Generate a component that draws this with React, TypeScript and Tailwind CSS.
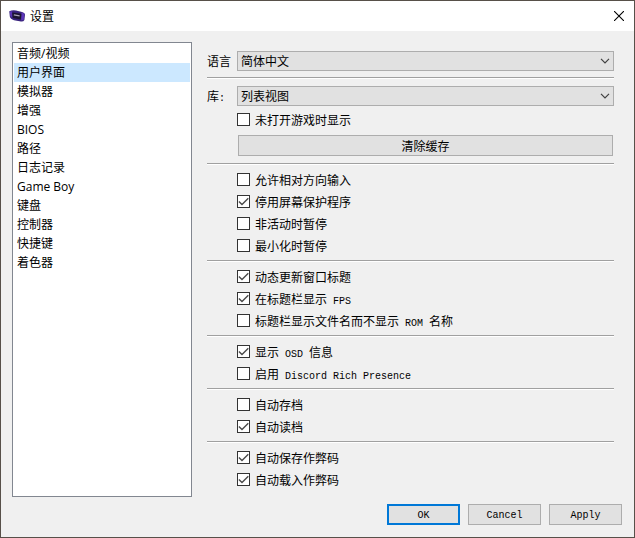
import { ReactNode } from 'react'
import { clsx } from 'clsx'

const pages = [
  '音频/视频',
  '用户界面',
  '模拟器',
  '增强',
  'BIOS',
  '路径',
  '日志记录',
  'Game Boy',
  '键盘',
  '控制器',
  '快捷键',
  '着色器',
]

interface Option {
  label: string
  checked?: boolean
}

const groups: Option[][] = [
  [
    { label: '允许相对方向输入' },
    { label: '停用屏幕保护程序', checked: true },
    { label: '非活动时暂停' },
    { label: '最小化时暂停' },
  ],
  [
    { label: '动态更新窗口标题', checked: true },
    { label: '在标题栏显示 FPS', checked: true },
    { label: '标题栏显示文件名而不显示 ROM 名称' },
  ],
  [
    { label: '显示 OSD 信息', checked: true },
    { label: '启用 Discord Rich Presence' },
  ],
  [{ label: '自动存档' }, { label: '自动读档', checked: true }],
  [
    { label: '自动保存作弊码', checked: true },
    { label: '自动载入作弊码', checked: true },
  ],
]

// Latin runs are set in a half-width face, half as wide as a Chinese character
function Mixed({ text }: { text: string }) {
  return (
    <span className="whitespace-pre">
      {text.split(/([ -~]+)/).map((part, i) =>
        i % 2 ? (
          <span key={i} className="font-['Liberation_Mono',monospace] text-[10px] leading-none">
            {part}
          </span>
        ) : (
          part
        )
      )}
    </span>
  )
}

function CheckBox({ label, checked }: Option) {
  return (
    <label className="flex h-[13px] items-center gap-[5px]">
      <span className="grid shrink-0">
        <input
          type="checkbox"
          defaultChecked={checked}
          className="peer col-start-1 row-start-1 size-[13px] appearance-none border border-[#333] bg-white"
        />
        <svg
          viewBox="0 0 13 13"
          className="pointer-events-none invisible col-start-1 row-start-1 size-[13px] peer-checked:visible"
        >
          <path d="M1.9 6.4 5 9.5 11.3 3.2" fill="none" stroke="#4a4a4a" strokeWidth="1.4" />
        </svg>
      </span>
      <Mixed text={label} />
    </label>
  )
}

function ComboBox({ id, label, value }: { id: string; label: string; value: string }) {
  return (
    <div className="flex items-center">
      <label htmlFor={id} className="w-[30px] shrink-0">
        <Mixed text={label} />
      </label>
      <div className="grid flex-1 items-center">
        <select
          id={id}
          className="col-start-1 row-start-1 h-5 appearance-none border border-[#adadad] bg-[#e1e1e1] px-[3px]"
        >
          <option>{value}</option>
        </select>
        <svg
          viewBox="0 0 10 6"
          className="pointer-events-none col-start-1 row-start-1 mr-1 h-1.5 w-2.5 justify-self-end"
        >
          <path d="M1 .8 5 4.8 9 .8" fill="none" stroke="#404040" strokeWidth="1.2" />
        </svg>
      </div>
    </div>
  )
}

function Separator() {
  return <hr className="h-0.5 border-t border-b border-t-[#a0a0a0] border-b-white" />
}

function PushButton({ children, primary }: { children: ReactNode; primary?: boolean }) {
  return (
    <button
      className={clsx(
        "h-[21px] w-[73px] bg-[#e1e1e1] pt-0.5 font-['Liberation_Mono',monospace] text-[10px] leading-4",
        primary ? 'border-2 border-[#0078d7]' : 'border border-[#adadad]'
      )}
    >
      {children}
    </button>
  )
}

function Logo() {
  return (
    <svg viewBox="0 0 16 12" className="h-3 w-4">
      <path
        d="M.3 1.2Q3 0 7 .5L13 2Q15.8 2.6 16 4.5L15.4 10Q14.6 11.8 12 11.6L5 10.2Q1.4 9.2.8 6.5Z"
        fill="#38237c"
      />
      <path d="M12.4 2.6 15.4 3.6 14.8 9.8 12.2 10.6Z" fill="#5b35b8" />
      <path d="M.8 1.6 3.2 1.2 2.8 7.6 1.3 6Z" fill="#5b35b8" />
      <path d="M3.2 2.4 12.4 3.8 11.8 9.6 3.8 8Z" fill="#1b1430" />
      <path d="M4.8 4.8 10.6 5.9" stroke="#a9a4ba" strokeWidth="1.2" />
    </svg>
  )
}

export default function App() {
  return (
    <div className="flex min-h-screen flex-col border border-[#575049] bg-[#f0f0f0] font-['Noto_Sans_CJK_SC',sans-serif] text-xs leading-4 text-black">
      <header className="flex h-[30px] items-center bg-white pr-2.5 pl-2">
        <Logo />
        <h1 className="ml-[5px] flex-1">设置</h1>
        <button aria-label="关闭">
          <svg viewBox="0 0 10 10" className="size-2.5">
            <path d="M0 0 10 10M10 0 0 10" stroke="#000" strokeWidth="1.1" />
          </svg>
        </button>
      </header>

      <main className="flex flex-1 pt-[11px] pr-5 pl-[11px]">
        <nav className="w-[180px] shrink-0 border border-[#828790] bg-white p-px font-['Open_Sans','Noto_Sans_CJK_SC',sans-serif]">
          <ul>
            {pages.map((page, i) => (
              <li key={page}>
                <a
                  href="#"
                  aria-current={i === 1 ? 'page' : undefined}
                  className={clsx('block h-[19px] px-[3px] leading-[19px]', i === 1 && 'bg-[#cce8ff]')}
                >
                  {page}
                </a>
              </li>
            ))}
          </ul>
        </nav>

        <form className="ml-[15px] flex-1 pt-[9px]">
          <ComboBox id="language" label="语言" value="简体中文" />
          <div className="pt-1.5 pb-[7px]">
            <Separator />
          </div>
          <ComboBox id="library" label="库:" value="列表视图" />
          <div className="flex flex-col gap-[9px] py-[7px] pl-[30px]">
            <CheckBox label="未打开游戏时显示" />
            <button type="button" className="mx-px h-[21px] border border-[#adadad] bg-[#e1e1e1]">
              清除缓存
            </button>
          </div>
          {groups.map((options, i) => (
            <div key={i}>
              <Separator />
              <div className="flex flex-col gap-[9px] py-2 pl-[30px]">
                {options.map((option) => (
                  <CheckBox key={option.label} {...option} />
                ))}
              </div>
            </div>
          ))}
        </form>
      </main>

      <footer className="flex justify-end gap-2 pt-[7px] pr-3 pb-3">
        <PushButton primary>OK</PushButton>
        <PushButton>Cancel</PushButton>
        <PushButton>Apply</PushButton>
      </footer>
    </div>
  )
}
